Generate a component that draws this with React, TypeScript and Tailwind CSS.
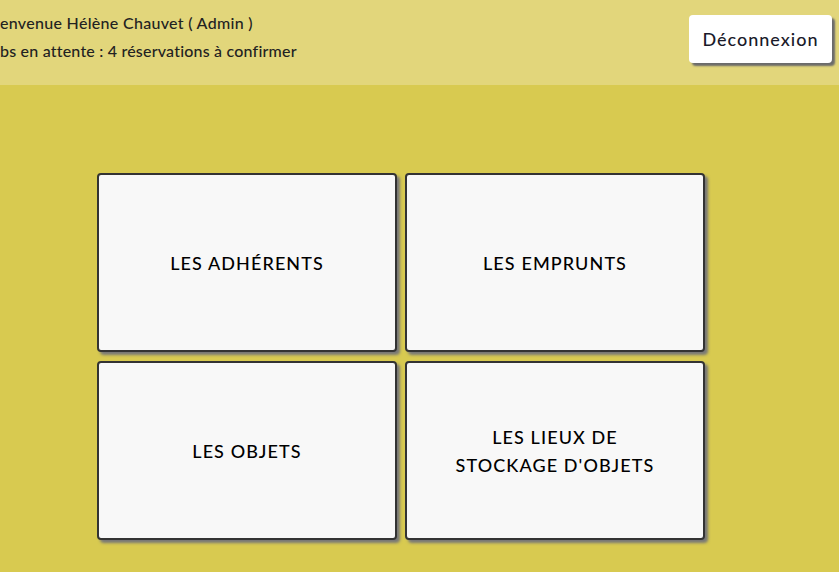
const cards = [
  ["LES ADHÉRENTS"],
  ["LES EMPRUNTS"],
  ["LES OBJETS"],
  ["LES LIEUX DE", "STOCKAGE D'OBJETS"],
];

export default function App() {
  return (
    <div className="min-h-[572px] bg-[#d8ca50] font-['Lato',sans-serif] text-[#222]">
      <header className="flex h-[85px] items-start justify-between bg-[#e2d67b] pr-[7px]">
        <div className="pt-[9px] text-[16px] leading-[28px] font-medium">
          <p className="tracking-[0.3px]">envenue Hélène Chauvet ( Admin )</p>
          <p className="tracking-[0.2px]">bs en attente : 4 réservations à confirmer</p>
        </div>
        <button className="mt-[15px] h-[48px] w-[143px] rounded-[4px] bg-white text-[18px] font-medium tracking-[1px] text-[#1a1a2a] shadow-[3px_3px_2px_#6b6b6b]">
          Déconnexion
        </button>
      </header>
      <main className="grid grid-cols-[300px_300px] gap-x-[8px] gap-y-[9px] pl-[97px] pt-[88px]">
        {cards.map((lines) => (
          <div
            key={lines.join(" ")}
            className="flex h-[179px] flex-col items-center justify-center rounded-[4px] border-2 border-[#333] bg-[#f8f8f8] text-[18px] leading-[28px] font-medium tracking-[1.1px] text-black shadow-[3px_3px_3px_#777]"
          >
            {lines.map((l) => (
              <span key={l}>{l}</span>
            ))}
          </div>
        ))}
      </main>
    </div>
  );
}
